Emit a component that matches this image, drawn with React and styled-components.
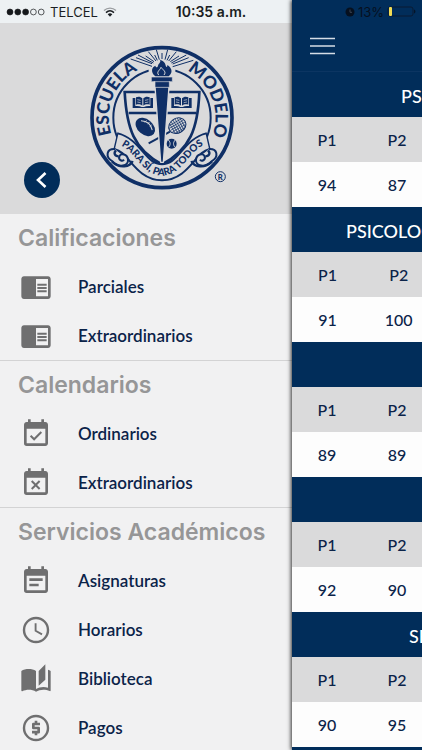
import React from "react"
import styled, { createGlobalStyle } from "styled-components"
import {
  MdChromeReaderMode,
  MdEventAvailable,
  MdEventBusy,
  MdEventNote,
} from "react-icons/md"

const navy = "#012d5a"
const ink = "#0b2349"
const crestBlue = "#0f2f66"
const silver = "#dadadb"

// Styles
const GlobalStyle = createGlobalStyle`
  * {
    box-sizing: border-box;
  }
  body {
    margin: 0;
    font-family: Lato, "Open Sans", sans-serif;
    color: ${ink};
  }
`

const Screen = styled.div`
  position: relative;
  display: flex;
  height: 100vh;
  overflow: hidden;
  background: #f1f1f2;
`

const StatusBar = styled.div`
  position: absolute;
  top: 0;
  left: 0;
  right: 0;
  z-index: 3;
  height: 23px;
  padding: 0 6px;
  display: grid;
  grid-template-columns: 1fr auto 1fr;
  align-items: center;
  font-family: Inter, sans-serif;
  font-size: 13px;
  color: #1b1e22;
`

const StatusGroup = styled.div`
  display: flex;
  align-items: center;
  gap: ${({ $gap }) => $gap}px;
  justify-content: ${({ $end }) => ($end ? "flex-end" : "flex-start")};
`

const Clock = styled.span`
  font-size: 14px;
  font-weight: 600;
`

const Charge = styled.span`
  color: #06101f;
`

const Drawer = styled.aside`
  flex: 0 0 292px;
  padding-top: 23px;
  background: linear-gradient(#edf1f3, #edf1f3) top / 100% 23px no-repeat;
`

const DrawerHeader = styled.header`
  display: flex;
  align-items: flex-start;
  height: 191px;
  padding: 12px 24px;
  gap: 20px;
  background: ${silver};
`

const BackButton = styled.button`
  width: 36px;
  height: 36px;
  margin-top: 127px;
  padding: 0;
  display: grid;
  place-items: center;
  border: 0;
  border-radius: 50%;
  background: ${navy};
`

const Section = styled.section`
  & + & {
    border-top: 1px solid #d3d3d4;
  }
`

const SectionTitle = styled.h2`
  margin: 0;
  padding: 0 18px;
  font-family: Inter, sans-serif;
  font-size: 23px;
  font-weight: 600;
  line-height: 48px;
  color: #969697;
`

const MenuList = styled.ul`
  margin: 0;
  padding: 0;
  list-style: none;
`

const MenuLink = styled.a`
  display: flex;
  align-items: center;
  gap: 26px;
  height: 49px;
  padding: 0 20px;
  font-size: 17px;
  font-weight: 600;
  color: ${ink};
  text-decoration: none;

  svg {
    flex: none;
    width: 32px;
    height: 32px;
    color: #6f6f70;
  }
`

const Page = styled.main`
  position: relative;
  z-index: 2;
  flex: 1;
  min-width: 0;
  overflow: hidden;
  background: #fdfdfd;
  box-shadow: -1px 0 4px rgba(0, 0, 0, 0.8);
`

const NavBar = styled.div`
  height: 72px;
  padding: 32px 16px 0;
  background: ${navy};
  border-bottom: 1px solid #0c3562;
`

const MenuButton = styled.button`
  display: grid;
  place-items: center;
  width: 28px;
  height: 28px;
  padding: 0;
  border: 0;
  background: none;
`

const Grades = styled.table`
  width: 140px;
  table-layout: fixed;
  border-collapse: collapse;
  font-size: 16px;
  font-weight: 500;

  caption {
    height: 45px;
    padding-left: ${({ $indent }) => $indent}px;
    background: ${navy};
    color: #ffffff;
    font-size: 18px;
    line-height: 48px;
    text-align: left;
    white-space: nowrap;
  }
  th,
  td {
    height: 45px;
    padding: 0;
    font-weight: 500;
    text-align: center;
  }
  th {
    background: ${silver};
  }
`

const NextSubject = styled.div`
  height: 45px;
  background: ${navy};
`

const menu = [
  {
    title: "Calificaciones",
    items: [
      { label: "Parciales", icon: MdChromeReaderMode },
      { label: "Extraordinarios", icon: MdChromeReaderMode },
    ],
  },
  {
    title: "Calendarios",
    items: [
      { label: "Ordinarios", icon: MdEventAvailable },
      { label: "Extraordinarios", icon: MdEventBusy },
    ],
  },
  {
    title: "Servicios Académicos",
    items: [
      { label: "Asignaturas", icon: MdEventNote },
      { label: "Horarios", icon: ClockIcon },
      { label: "Biblioteca", icon: BookIcon },
      { label: "Pagos", icon: CoinIcon },
    ],
  },
]

const grades = [
  { title: "PS", indent: 109, p1: 94, p2: 87 },
  { title: "PSICOLOG", indent: 54, p1: 91, p2: 100 },
  { title: "", indent: 0, p1: 89, p2: 89 },
  { title: "", indent: 0, p1: 92, p2: 90 },
  { title: "SE", indent: 117, p1: 90, p2: 95 },
]

function ClockIcon() {
  return (
    <svg viewBox="0 0 24 24" fill="none" stroke="currentColor">
      <circle cx="12" cy="12" r="9" strokeWidth="1.8" />
      <path d="M11.7 7v5.6l4.8 2.7" strokeWidth="1.4" />
    </svg>
  )
}

function BookIcon() {
  return (
    <svg viewBox="0 0 24 24" fill="currentColor">
      <path d="M19 1l-5 5v11l5-4.5V1zM1 6v14.65c0 .25.25.5.5.5.1 0 .15-.05.25-.05C3.1 20.45 5.05 20 6.5 20c1.95 0 4.05.4 5.5 1.5V6c-1.45-1.1-3.55-1.5-5.5-1.5S2.45 4.9 1 6zm22 13.5V6c-.6-.45-1.25-.75-2-1v13.5c-1.1-.35-2.3-.5-3.5-.5-1.7 0-4.15.65-5.5 1.5v2c1.35-.85 3.8-1.5 5.5-1.5 1.65 0 3.35.3 4.75 1.05.1.05.15.05.25.05.25 0 .5-.25.5-.5v-1.1z" />
    </svg>
  )
}

function CoinIcon() {
  return (
    <svg viewBox="0 0 24 24" fill="none" stroke="currentColor">
      <circle cx="12" cy="12" r="9" strokeWidth="1.8" />
      <path
        d="M15 9H10v3h4v3.100H9M12 6.500V9M12 15v2.500"
        strokeWidth="2"
        strokeLinejoin="round"
      />
    </svg>
  )
}

const Wifi = () => (
  <svg width="14" height="10" viewBox="0 0 14 10" fill="none">
    <path d="M1 3.500C4.500.2 9.500.2 13 3.500" stroke="#9a9da0" strokeWidth="1.300" />
    <path d="M3 5.600c2.400-2.200 5.600-2.200 8 0" stroke="#1b1e22" strokeWidth="1.500" />
    <path d="M4.700 7.200c1.400-1.200 3.200-1.200 4.600 0L7 9.700z" fill="#1b1e22" />
  </svg>
)

const Signal = () => (
  <svg width="39" height="8" viewBox="0 0 39 8" stroke="#15181b">
    {[0, 1, 2, 3, 4].map(n => (
      <circle
        key={n}
        cx={4 + n * 7.8}
        cy="4"
        r={n < 3 ? 3 : 2.9}
        fill={n < 3 ? "#15181b" : "none"}
        strokeWidth={n < 3 ? 0.6 : 0.7}
      />
    ))}
  </svg>
)

const Alarm = () => (
  <svg width="10" height="10" viewBox="0 0 10 10">
    <circle cx="5" cy="5" r="4.500" fill="#06101f" />
    <path d="M5 2.500v2.800h2" fill="none" stroke="#3a4350" />
  </svg>
)

const Battery = () => (
  <svg width="29" height="11" viewBox="0 0 29 11">
    <rect x="1" y="1" width="25" height="9" rx="2" fill="none" stroke="#0a1b33" />
    <path d="M27.200 3.500v4c1.600-.5 1.600-3.500 0-4z" fill="#06101f" />
    <rect x="2" y="1" width="3" height="9" rx="1" fill="#f3dc54" />
  </svg>
)

const rays = [
  [152, 72, 216, 94],
  [168, 68, 216, 86],
  [174, 60, 220, 84],
  [197, 63, 222, 80],
  [205, 50, 228, 78],
  [224, 60, 232, 76],
  [229, 44, 238, 74],
  [246, 54, 246, 72],
  [263, 44, 255, 74],
  [269, 60, 261, 76],
  [289, 50, 266, 78],
  [297, 63, 271, 80],
  [319, 60, 274, 84],
  [326, 68, 278, 87],
  [340, 76, 278, 95],
]

const Crest = () => (
  <svg
    width="160"
    height="160"
    viewBox="0 0 480 480"
    fill="none"
    stroke={crestBlue}
    overflow="visible"
    fontFamily="Lato, sans-serif"
    fontWeight="900"
  >
    <circle cx="246" cy="248" r="210" strokeWidth="11" />
    <circle cx="246" cy="248" r="146" strokeWidth="6" />
    <rect x="206" y="84" width="80" height="60" fill={silver} stroke="none" />
    {rays.map(([x1, y1, x2, y2], i) => (
      <line key={i} x1={x1} y1={y1} x2={x2} y2={y2} strokeWidth="3" />
    ))}

    {/* shield */}
    <path
      d="M134 171H358C354 280 330 345 246 388C162 345 140 280 134 171Z"
      strokeWidth="8"
    />
    <path d="M146 234H348" strokeWidth="8" />

    {/* books */}
    {[158, 274].map(x => (
      <g key={x} transform={`translate(${x} 184)`} fill={crestBlue} stroke="none">
        <path d="M0 5h8v24c8-1 14 0 19 3h7c5-3 11-4 19-3V5h8v30H0z" />
        <path d="M10 3c7-3 14-2 19 3v22c-5-4-12-5-19-3z" />
        <path d="M51 3c-7-3-14-2-19 3v22c5-4 12-5 19-3z" />
        <path
          d="M14 10l10 2M14 17l10 2M47 10l-10 2M47 17l-10 2"
          stroke={silver}
          strokeWidth="2"
        />
      </g>
    ))}

    {/* football, racket and ball */}
    <g transform="rotate(40 196 276)">
      <ellipse cx="196" cy="276" rx="33" ry="23" fill={crestBlue} stroke="none" />
      <path d="M174 270c14-11 30-11 44 0" stroke={silver} strokeWidth="3" />
      <path d="M186 258v9M196 256v9M206 258v9" stroke={silver} strokeWidth="2" />
    </g>
    <path d="M206 325L270 290" strokeWidth="6" />
    <g transform="rotate(-30 292 272)">
      <ellipse cx="292" cy="272" rx="27" ry="22" strokeWidth="3" />
      <path
        d="M272 260h40M268 267h48M267 274h50M270 281h44M276 288h32M275 256v32M282 252v40M289 250v44M296 250v44M303 252v40M310 257v30"
        strokeWidth="2"
      />
    </g>
    <circle cx="275" cy="326" r="15" fill={crestBlue} stroke="none" />
    <path d="M265 315c7 7 7 14 1 22M286 315c-7 7-7 14-1 22" stroke={silver} strokeWidth="3" />

    {/* torch */}
    <path d="M225 155H267L250 382H242Z" fill={crestBlue} stroke={silver} strokeWidth="4" />
    <path
      d="M214 126H277V140H268V157H225V140H214Z"
      fill={crestBlue}
      stroke={silver}
      strokeWidth="2"
    />
    <path d="M221 140H270" stroke={silver} strokeWidth="2" />
    <path
      d="M226 124C210 110 216 96 226 92C228 98 232 98 234 92C236 84 244 82 240 74C256 80 256 88 258 94C260 98 262 96 262 90C278 100 278 114 266 124Z"
      fill={crestBlue}
      stroke="none"
    />
    <path d="M236 120C228 110 240 106 243 97C250 106 260 110 252 120" stroke={silver} strokeWidth="3" />

    {/* ribbon */}
    <path
      d="M106 318C166 332 178 410 246 412C314 410 326 332 386 318"
      strokeWidth="54"
    />
    <path
      d="M110 319C166 332 178 410 246 412C314 410 326 332 382 319"
      stroke={silver}
      strokeWidth="42"
    />
    {[undefined, "translate(492 0) scale(-1 1)"].map((flip, i) => (
      <g key={i} transform={flip}>
        <path
          d="M106 342C78 340 76 366 96 378C118 402 146 392 144 374C142 356 122 354 118 364C114 376 128 380 132 374"
          strokeWidth="6"
          fill={silver}
        />
        <path d="M108 346C100 354 104 364 116 364M96 380C120 402 150 396 158 378" strokeWidth="7" />
      </g>
    ))}

    <path id="ring" d="M246 408A160 160 0 1 1 247 408" stroke="none" />
    <path
      id="motto"
      d="M106 326C168 340 178 418 246 422C314 418 324 340 388 324"
      stroke="none"
    />
    <g fill={crestBlue} stroke="none" textAnchor="middle">
      <text fontSize="52">
        <textPath href="#ring" startOffset="31.200%">
          ESCUELA
        </textPath>
      </text>
      <text fontSize="52">
        <textPath href="#ring" startOffset="69.200%">
          MODELO
        </textPath>
      </text>
      <text fontSize="30">
        <textPath href="#motto" startOffset="50%">
          PARA SÍ, PARA TODOS
        </textPath>
      </text>
      <text x="421" y="434" fontSize="23">
        R
      </text>
    </g>
    <circle cx="421" cy="425" r="15" strokeWidth="3" />
  </svg>
)

const App = () => {
  return (
    <Screen>
      <GlobalStyle />
      <StatusBar>
        <StatusGroup $gap={5}>
          <Signal />
          <span>TELCEL</span>
          <Wifi />
        </StatusGroup>
        <Clock>10:35 a.m.</Clock>
        <StatusGroup $gap={3} $end>
          <Alarm />
          <Charge>13%</Charge>
          <Battery />
        </StatusGroup>
      </StatusBar>
      <Drawer>
        <DrawerHeader>
          <BackButton aria-label="Cerrar">
            <svg width="36" height="36" viewBox="0 0 36 36" fill="none">
              <path d="M21.500 11L14 18l7.500 7" stroke="#fff" strokeWidth="2.600" />
            </svg>
          </BackButton>
          <Crest />
        </DrawerHeader>
        {menu.map(section => (
          <Section key={section.title}>
            <SectionTitle>{section.title}</SectionTitle>
            <MenuList>
              {section.items.map(({ label, icon: Icon }) => (
                <li key={label}>
                  <MenuLink href="#">
                    <Icon />
                    {label}
                  </MenuLink>
                </li>
              ))}
            </MenuList>
          </Section>
        ))}
      </Drawer>
      <Page>
        <NavBar>
          <MenuButton aria-label="Menú">
            <svg width="28" height="18" viewBox="0 0 28 18" stroke="#d5dde6">
              <path d="M2 1.500h25M2 9h25M2 16.500h25" strokeWidth="1.300" />
            </svg>
          </MenuButton>
        </NavBar>
        {grades.map((row, index) => (
          <Grades key={index} $indent={row.indent}>
            <caption>{row.title}</caption>
            <thead>
              <tr>
                <th>P1</th>
                <th>P2</th>
              </tr>
            </thead>
            <tbody>
              <tr>
                <td>{row.p1}</td>
                <td>{row.p2}</td>
              </tr>
            </tbody>
          </Grades>
        ))}
        <NextSubject />
      </Page>
    </Screen>
  )
}

export default App
